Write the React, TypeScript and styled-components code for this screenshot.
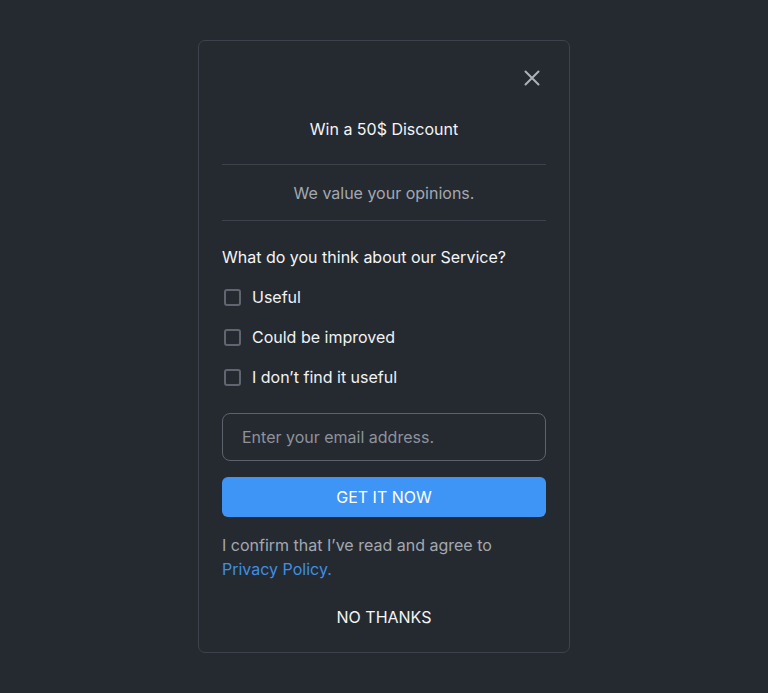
import React, { FC } from "react";
import styled, { createGlobalStyle } from "styled-components";

const GlobalStyle = createGlobalStyle`
  * {
    box-sizing: border-box;
  }
  body {
    margin: 0;
    background: #252a31;
    font-family: Inter, "Noto Sans", sans-serif;
    -webkit-font-smoothing: antialiased;
  }
`;

const Page = styled.div`
  min-height: 693px;
  display: flex;
  justify-content: center;
  padding-top: 40px;
`;

const Card = styled.div`
  width: 372px;
  height: 613px;
  border: 1px solid #3d434c;
  border-radius: 7px;
  background: #252a31;
  padding: 25px 23px 15px;
  display: flex;
  flex-direction: column;
`;

const CloseRow = styled.div`
  display: flex;
  justify-content: flex-end;
  height: 24px;
`;

const CloseButton = styled.button`
  width: 24px;
  height: 24px;
  margin-right: 2px;
  padding: 0;
  border: none;
  background: transparent;
  color: #acb1b9;
  display: flex;
  align-items: center;
  justify-content: center;
  cursor: pointer;
`;

const Title = styled.h2`
  margin: 27px 0 0;
  padding-bottom: 23px;
  border-bottom: 1px solid #3d434c;
  font-size: 16px;
  line-height: 24px;
  font-weight: 400;
  color: #f4f5f7;
  text-align: center;
`;

const Subtitle = styled.p`
  margin: 0;
  padding: 16px 0 15px;
  border-bottom: 1px solid #3d434c;
  font-size: 16px;
  line-height: 24px;
  color: #a3a8b0;
  text-align: center;
`;

const Question = styled.p`
  margin: 24px 0 0;
  font-size: 16px;
  line-height: 24px;
  font-weight: 400;
  color: #f4f5f7;
`;

const Options = styled.div`
  display: flex;
  flex-direction: column;
  gap: 16px;
  margin-top: 16px;
`;

const Option = styled.label`
  display: flex;
  align-items: center;
  gap: 11px;
  height: 24px;
  font-size: 16px;
  color: #f1f2f4;
  cursor: pointer;
`;

const Box = styled.span`
  width: 17px;
  height: 17px;
  margin-left: 2px;
  border: 2px solid #60666f;
  border-radius: 3px;
`;

const EmailInput = styled.input`
  margin-top: 24px;
  height: 48px;
  width: 100%;
  padding: 0 19px;
  border: 1px solid #5d636c;
  border-radius: 8px;
  background: transparent;
  font-family: inherit;
  font-size: 16px;
  color: #f1f2f4;
  outline: none;
  &::placeholder {
    color: #8e939b;
  }
`;

const PrimaryButton = styled.button`
  margin-top: 16px;
  height: 40px;
  width: 100%;
  border: none;
  border-radius: 6px;
  background: #3f95f6;
  color: #ffffff;
  font-family: inherit;
  font-size: 16px;
  font-weight: 400;
  cursor: pointer;
`;

const Consent = styled.p`
  margin: 16px 0 0;
  font-size: 16px;
  line-height: 24px;
  color: #a3a8b0;
`;

const PolicyLink = styled.a`
  color: #3f8fe6;
  text-decoration: none;
`;

const TextButton = styled.button`
  margin-top: 16px;
  height: 40px;
  border: none;
  background: transparent;
  color: #f4f5f7;
  font-family: inherit;
  font-size: 16px;
  font-weight: 400;
  cursor: pointer;
`;

const options = ["Useful", "Could be improved", "I don’t find it useful"];

const CloseIcon: FC = () => (
  <svg width="16" height="16" viewBox="0 0 16 16" fill="none">
    <path
      d="M1.5 1.5 L14.5 14.5 M14.5 1.5 L1.5 14.5"
      stroke="currentColor"
      strokeWidth="2"
      strokeLinecap="round"
    />
  </svg>
);

const App: FC = () => {
  return (
    <Page>
      <GlobalStyle />
      <Card>
        <CloseRow>
          <CloseButton aria-label="Close">
            <CloseIcon />
          </CloseButton>
        </CloseRow>
        <Title>Win a 50$ Discount</Title>
        <Subtitle>We value your opinions.</Subtitle>
        <Question>What do you think about our Service?</Question>
        <Options>
          {options.map((o) => (
            <Option key={o}>
              <Box />
              {o}
            </Option>
          ))}
        </Options>
        <EmailInput placeholder="Enter your email address." />
        <PrimaryButton>GET IT NOW</PrimaryButton>
        <Consent>
          I confirm that I’ve read and agree to
          <br />
          <PolicyLink href="#">Privacy Policy.</PolicyLink>
        </Consent>
        <TextButton>NO THANKS</TextButton>
      </Card>
    </Page>
  );
};

export default App;
